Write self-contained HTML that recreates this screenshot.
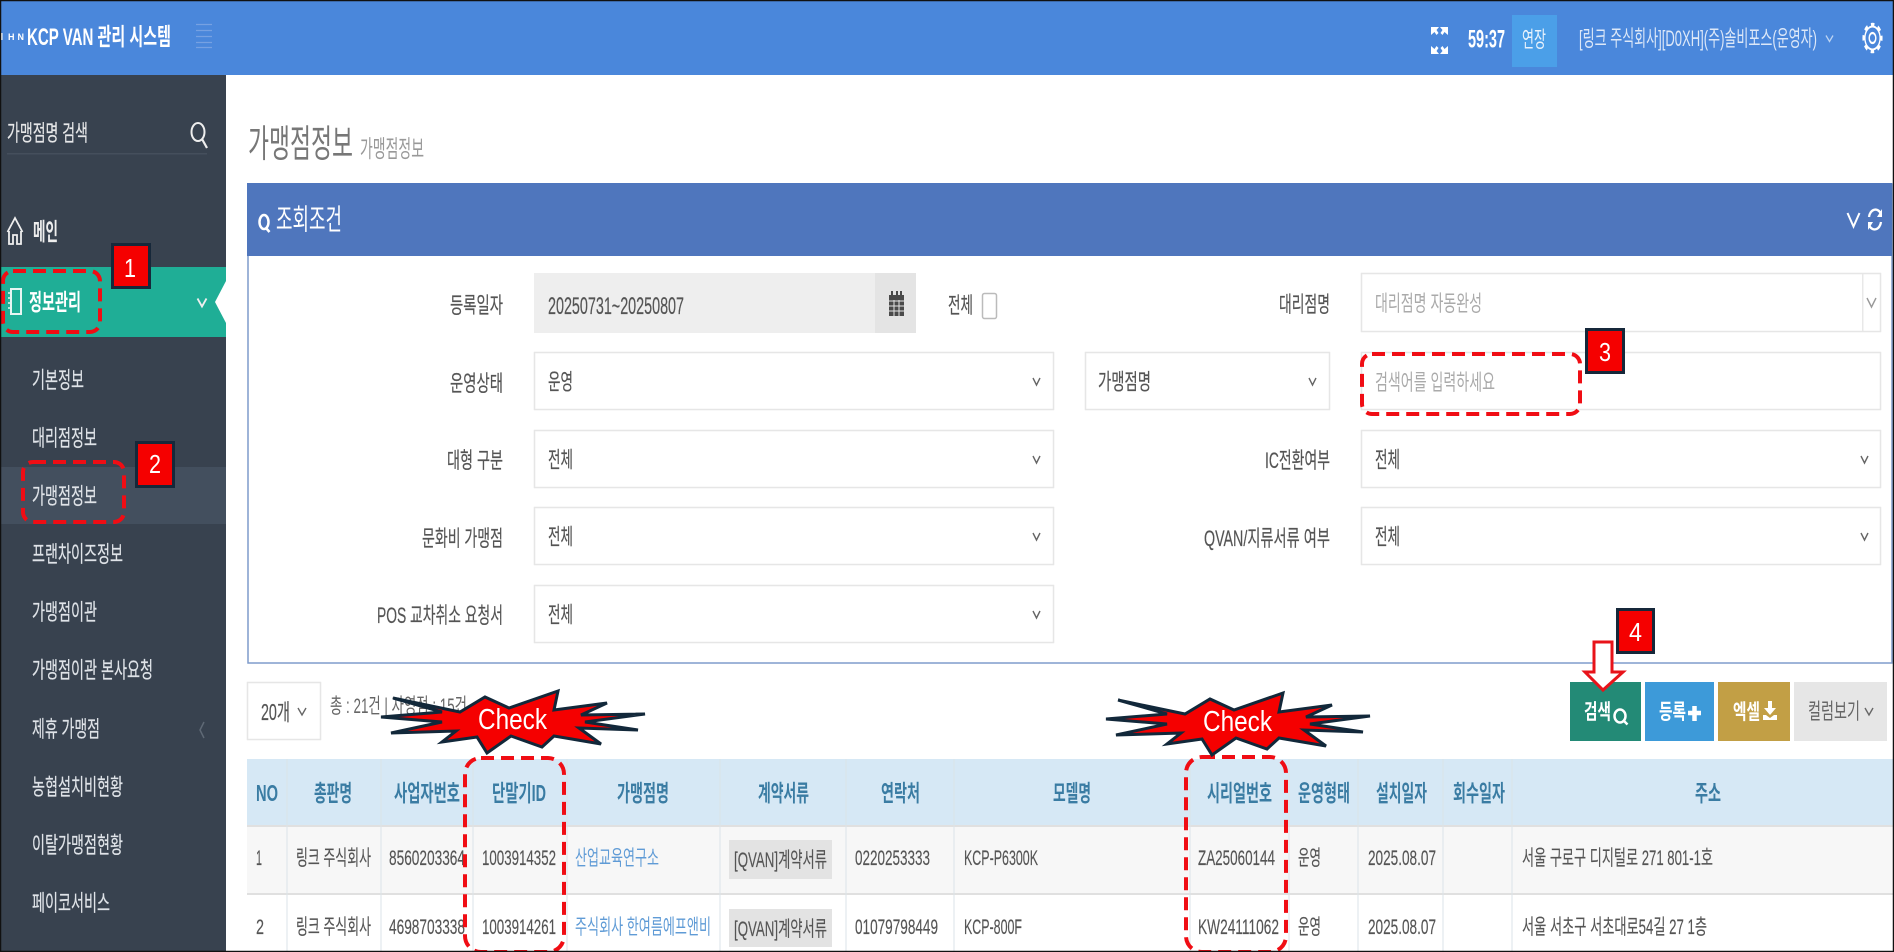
<!DOCTYPE html>
<html lang="ko"><head><meta charset="utf-8"><title>KCP VAN 관리 시스템</title>
<style>
html,body{margin:0;padding:0;background:#fff;width:1894px;height:952px;overflow:hidden}
svg{display:block;font-family:"Liberation Sans","Noto Sans CJK KR",sans-serif;filter:blur(.35px)}
.s{fill:#dfe3e8;stroke:#dfe3e8;stroke-width:.2px;font-size:22.500px}
.l{fill:#555;stroke:#555;stroke-width:.2px;font-size:22px}
.f{fill:#555;stroke:#555;stroke-width:.2px;font-size:22px}
.p{fill:#aaa;font-size:22px}
.h{fill:#3a7ca3;font-size:23px;font-weight:700}
.t{fill:#555;stroke:#555;stroke-width:.15px;font-size:21px}
.a{fill:#5f9bd6;font-size:21px}
.n{fill:#fff;font-size:26px}
.c{fill:#fff;font-size:29px}
.b{fill:#fff;font-size:21px;font-weight:700}
</style></head><body>
<svg width="1894" height="952" viewBox="0 0 1894 952" xmlns="http://www.w3.org/2000/svg">
<rect width="1894" height="952" fill="#fff"/>
<!-- header -->
<rect width="1894" height="75" fill="#4a87db"/>
<rect x="1" y="33" width="1.500" height="7" fill="#fff"/>
<text x="8" y="40" font-size="9" font-weight="700" fill="#fff" textLength="16" lengthAdjust="spacing">HN</text>
<text x="27" y="45" font-size="24" font-weight="700" fill="#fff" textLength="144" lengthAdjust="spacingAndGlyphs">KCP VAN 관리 시스템</text>
<path d="M196 24.500H212M196 30.500H212M196 36.500H212M196 42.500H212M196 47.500H212" stroke="#76a1e2" stroke-width="1.200"/>
<g fill="#fff"><path d="M1431 27h8l-2.500 3 2 3-2 2-2-3-3.500 3zM1448 27h-8l2.500 3-2 3 2 2 2-3 3.500 3zM1431 54h8l-2.500-3 2-3-2-2-2 3-3.500-3zM1448 54h-8l2.500-3-2-3 2-2 2 3 3.500-3z"/></g>
<text x="1468" y="47.500" font-size="25" font-weight="700" fill="#fff" textLength="37" lengthAdjust="spacingAndGlyphs">59:37</text>
<rect x="1512" y="15" width="45" height="52" fill="#4b9fe8"/>
<text x="1522" y="47" font-size="22" fill="#e8f2fc" textLength="24" lengthAdjust="spacingAndGlyphs">연장</text>
<text x="1579" y="46" font-size="22" fill="#dde8f8" textLength="238" lengthAdjust="spacingAndGlyphs">[링크 주식회사][D0XH](주)솔비포스(운영자)</text>
<path d="M1826 35.500l3.500 6 3.500-6" fill="none" stroke="#bcd3f2" stroke-width="1.300"/>
<g transform="translate(1872.500 38) scale(.66 1)" fill="none" stroke="#fff"><circle r="11.500" stroke-width="2"/><circle r="13.500" stroke-width="3.500" stroke-dasharray="5.300 5.300" stroke-dashoffset="2.600"/><circle r="5" stroke-width="2.200"/></g>
<!-- sidebar -->
<rect y="75" width="226" height="877" fill="#38424f"/>
<text x="7" y="141" class="s" style="fill:#e8e8e8" textLength="81" lengthAdjust="spacingAndGlyphs">가맹점명 검색</text>
<rect x="7" y="153" width="200" height="1.500" fill="#454f5c"/>
<ellipse cx="198" cy="132" rx="6.500" ry="9" fill="none" stroke="#eee" stroke-width="2"/><path d="M202 139l5 9" stroke="#eee" stroke-width="2.200"/>
<path d="M7.500 232L15 218l7.500 14M9 231v13h4v-9h4v9h4v-13" fill="none" stroke="#eee" stroke-width="1.800"/>
<text x="33" y="240" font-size="24" font-weight="700" fill="#eee" textLength="25" lengthAdjust="spacingAndGlyphs">메인</text>
<rect x="1" y="267" width="225" height="70" fill="#1fae96"/>
<path d="M226 281L215 302l11 21z" fill="#fff"/>
<path d="M197.500 298.500l4.500 8 4.500-8" fill="none" stroke="#eee" stroke-width="1.800"/>
<rect x="11" y="289" width="10" height="25" fill="none" stroke="#e8f5f2" stroke-width="2"/><path d="M8 293h3M8 298h3M8 303h3M8 308h3" stroke="#e8f5f2" stroke-width="1.500"/>
<text x="29" y="310" font-size="23" font-weight="700" fill="#fff" textLength="52" lengthAdjust="spacingAndGlyphs">정보관리</text>
<rect x="1" y="467" width="225" height="57" fill="#434f5e"/>
<text x="32" y="388" class="s" textLength="52" lengthAdjust="spacingAndGlyphs">기본정보</text>
<text x="32" y="446" class="s" textLength="65" lengthAdjust="spacingAndGlyphs">대리점정보</text>
<text x="32" y="504" class="s" textLength="65" lengthAdjust="spacingAndGlyphs">가맹점정보</text>
<text x="32" y="562" class="s" textLength="91" lengthAdjust="spacingAndGlyphs">프랜차이즈정보</text>
<text x="32" y="620" class="s" textLength="65" lengthAdjust="spacingAndGlyphs">가맹점이관</text>
<text x="32" y="678" class="s" textLength="121" lengthAdjust="spacingAndGlyphs">가맹점이관 본사요청</text>
<text x="32" y="737" class="s" textLength="68" lengthAdjust="spacingAndGlyphs">제휴 가맹점</text>
<text x="32" y="795" class="s" textLength="91" lengthAdjust="spacingAndGlyphs">농협설치비현황</text>
<text x="32" y="853" class="s" textLength="91" lengthAdjust="spacingAndGlyphs">이탈가맹점현황</text>
<text x="32" y="911" class="s" textLength="78" lengthAdjust="spacingAndGlyphs">페이코서비스</text>
<path d="M204 722l-4 8 4 8" fill="none" stroke="#5f6975" stroke-width="1.500"/>
<!-- title -->
<text x="248" y="157" font-size="38" fill="#777" textLength="105" lengthAdjust="spacingAndGlyphs">가맹점정보</text>
<text x="360" y="157" font-size="24" fill="#999" textLength="64" lengthAdjust="spacingAndGlyphs">가맹점정보</text>
<!-- panel -->
<rect x="248" y="184" width="1644" height="479" fill="#fff" stroke="#7f9ccc" stroke-width="1.500"/>
<rect x="247" y="183" width="1645" height="73" fill="#4f76bd"/>
<ellipse cx="264" cy="222" rx="4.500" ry="7" fill="none" stroke="#fff" stroke-width="2.500"/><path d="M266 228l3.500 4" stroke="#fff" stroke-width="2.500"/>
<text x="276" y="229.500" class="c" textLength="66" lengthAdjust="spacingAndGlyphs">조회조건</text>
<path d="M1847.500 213l6 13.500 6-13.500" fill="none" stroke="#fff" stroke-width="2"/>
<path d="M1869 217a6.500 9 0 0 1 12-3M1881 222a6.500 9 0 0 1-12 3" fill="none" stroke="#fff" stroke-width="2.300"/><path d="M1882 209v8h-5zM1868 230v-8h5z" fill="#fff"/>
<!-- labels -->
<text x="450" y="313" class="l" textLength="53" lengthAdjust="spacingAndGlyphs">등록일자</text>
<text x="450" y="391" class="l" textLength="53" lengthAdjust="spacingAndGlyphs">운영상태</text>
<text x="447" y="468" class="l" textLength="56" lengthAdjust="spacingAndGlyphs">대형 구분</text>
<text x="422" y="546" class="l" textLength="81" lengthAdjust="spacingAndGlyphs">문화비 가맹점</text>
<text x="377" y="623" class="l" textLength="126" lengthAdjust="spacingAndGlyphs">POS 교차취소 요청서</text>
<text x="1279" y="312" class="l" textLength="51" lengthAdjust="spacingAndGlyphs">대리점명</text>
<text x="1265" y="468" class="l" textLength="65" lengthAdjust="spacingAndGlyphs">IC전환여부</text>
<text x="1204" y="546" class="l" textLength="126" lengthAdjust="spacingAndGlyphs">QVAN/지류서류 여부</text>
<!-- date -->
<rect x="534" y="273" width="382" height="60" fill="#eee"/><rect x="875" y="273" width="41" height="60" fill="#e4e4e4"/>
<text x="548" y="314" class="f" style="font-size:24px" textLength="136" lengthAdjust="spacingAndGlyphs">20250731~20250807</text>
<rect x="889" y="295" width="15" height="21" fill="#4a4a4a"/><path d="M889 301h15M889 306h15M889 311h15M894 300v16M899 300v16" stroke="#e4e4e4" stroke-width="1"/><path d="M892 291v5M897 291v5M901 291v5" stroke="#4a4a4a" stroke-width="2"/>
<text x="948" y="313" class="l" textLength="25" lengthAdjust="spacingAndGlyphs">전체</text>
<rect x="982.500" y="293.500" width="14" height="25" rx="2" fill="#fff" stroke="#bbb" stroke-width="1.500"/>
<!-- selects -->
<g fill="#fff" stroke="#e6e6e6" stroke-width="1.500">
<rect x="534.500" y="352.500" width="519" height="57"/><rect x="534.500" y="430.500" width="519" height="57"/><rect x="534.500" y="507.500" width="519" height="57"/><rect x="534.500" y="585.500" width="519" height="57"/>
<rect x="1085.500" y="352.500" width="244" height="57"/>
<rect x="1361.500" y="273.500" width="519" height="58"/><rect x="1361.500" y="352.500" width="519" height="57"/><rect x="1361.500" y="430.500" width="519" height="57"/><rect x="1361.500" y="507.500" width="519" height="57"/>
</g>
<rect x="1862" y="274" width="1.500" height="57" fill="#e8e8e8"/>
<text x="548" y="389.500" class="f" textLength="25" lengthAdjust="spacingAndGlyphs">운영</text>
<text x="548" y="467.500" class="f" textLength="25" lengthAdjust="spacingAndGlyphs">전체</text>
<text x="548" y="544.500" class="f" textLength="25" lengthAdjust="spacingAndGlyphs">전체</text>
<text x="548" y="622.500" class="f" textLength="25" lengthAdjust="spacingAndGlyphs">전체</text>
<text x="1098" y="389.500" class="f" textLength="53" lengthAdjust="spacingAndGlyphs">가맹점명</text>
<text x="1375" y="311" class="p" textLength="107" lengthAdjust="spacingAndGlyphs">대리점명 자동완성</text>
<text x="1375" y="390" class="p" textLength="120" lengthAdjust="spacingAndGlyphs">검색어를 입력하세요</text>
<text x="1375" y="467.500" class="f" textLength="25" lengthAdjust="spacingAndGlyphs">전체</text>
<text x="1375" y="544.500" class="f" textLength="25" lengthAdjust="spacingAndGlyphs">전체</text>
<g fill="none" stroke="#666" stroke-width="1.400">
<path d="M1033 378l3.500 7 3.500-7M1033 456l3.500 7 3.500-7M1033 533l3.500 7 3.500-7M1033 611l3.500 7 3.500-7M1309 378l3.500 7 3.500-7M1861 456l3.500 7 3.500-7M1861 533l3.500 7 3.500-7"/>
<path d="M1867 298l4.500 9 4.500-9" stroke="#999"/>
</g>
<!-- list bar -->
<rect x="247.500" y="682.500" width="73" height="57" fill="#fff" stroke="#e6e6e6" stroke-width="1.500"/>
<text x="261" y="720" class="f" style="font-size:23px" textLength="29" lengthAdjust="spacingAndGlyphs">20개</text>
<path d="M298 708l4 7 4-7" fill="none" stroke="#666" stroke-width="1.400"/>
<text x="330" y="713" font-size="21" fill="#666" textLength="137" lengthAdjust="spacingAndGlyphs">총 : 21건 | 자영점 : 15건</text>
<!-- buttons -->
<rect x="1570" y="682" width="71" height="59" fill="#238a76"/>
<rect x="1645" y="682" width="69" height="59" fill="#3d9ad9"/>
<rect x="1718" y="682" width="72" height="59" fill="#c29f45"/>
<rect x="1794" y="682" width="93" height="59" fill="#e6e6e6"/>
<text x="1584" y="719" class="b" textLength="27" lengthAdjust="spacingAndGlyphs">검색</text>
<ellipse cx="1620" cy="716" rx="5.500" ry="6.500" fill="none" stroke="#fff" stroke-width="2.500"/><path d="M1624 721l3.500 3.500" stroke="#fff" stroke-width="2.500"/>
<text x="1659" y="719" class="b" textLength="27" lengthAdjust="spacingAndGlyphs">등록</text>
<path d="M1694.500 706v15M1688 713h13" stroke="#fff" stroke-width="4.500"/>
<text x="1733" y="719" class="b" textLength="27" lengthAdjust="spacingAndGlyphs">엑셀</text>
<path d="M1768 701h4v7h4l-6 7-6-7h4zM1763 715h3l4 3 4-3h3v5h-14z" fill="#fff"/>
<text x="1808" y="719" font-size="22" fill="#666" textLength="52" lengthAdjust="spacingAndGlyphs">컬럼보기</text>
<path d="M1865 708l4 7 4-7" fill="none" stroke="#666" stroke-width="1.400"/>
<!-- table -->
<rect x="247" y="759" width="1646" height="66" fill="#d6e8f5"/>
<rect x="247" y="825" width="1646" height="69" fill="#f7f7f7"/>
<rect x="247" y="825" width="1646" height="2" fill="#e0e0e0"/>
<rect x="247" y="893" width="1646" height="2" fill="#e0e0e0"/>
<path d="M287 759V952M381 759V952M473 759V952M567 759V952M720 759V952M846 759V952M954 759V952M1190 759V952M1289 759V952M1358 759V952M1443 759V952M1512 759V952" stroke="#dbe3e8" stroke-width="1"/>
<text x="256" y="801" class="h" textLength="22" lengthAdjust="spacingAndGlyphs">NO</text>
<text x="314" y="801" class="h" textLength="38" lengthAdjust="spacingAndGlyphs">총판명</text>
<text x="394" y="801" class="h" textLength="66" lengthAdjust="spacingAndGlyphs">사업자번호</text>
<text x="492" y="801" class="h" textLength="54" lengthAdjust="spacingAndGlyphs">단말기ID</text>
<text x="617" y="801" class="h" textLength="52" lengthAdjust="spacingAndGlyphs">가맹점명</text>
<text x="758" y="801" class="h" textLength="51" lengthAdjust="spacingAndGlyphs">계약서류</text>
<text x="881" y="801" class="h" textLength="39" lengthAdjust="spacingAndGlyphs">연락처</text>
<text x="1053" y="801" class="h" textLength="38" lengthAdjust="spacingAndGlyphs">모델명</text>
<text x="1207" y="801" class="h" textLength="65" lengthAdjust="spacingAndGlyphs">시리얼번호</text>
<text x="1298" y="801" class="h" textLength="52" lengthAdjust="spacingAndGlyphs">운영형태</text>
<text x="1376" y="801" class="h" textLength="51" lengthAdjust="spacingAndGlyphs">설치일자</text>
<text x="1453" y="801" class="h" textLength="52" lengthAdjust="spacingAndGlyphs">회수일자</text>
<text x="1695" y="801" class="h" textLength="26" lengthAdjust="spacingAndGlyphs">주소</text>
<!-- row 1 -->
<text x="256" y="865" class="t" textLength="6" lengthAdjust="spacingAndGlyphs">1</text>
<text x="296" y="865" class="t" textLength="75" lengthAdjust="spacingAndGlyphs">링크 주식회사</text>
<text x="389" y="865" class="t" textLength="76" lengthAdjust="spacingAndGlyphs">8560203364</text>
<text x="482" y="865" class="t" textLength="74" lengthAdjust="spacingAndGlyphs">1003914352</text>
<text x="575" y="865" class="a" textLength="84" lengthAdjust="spacingAndGlyphs">산업교육연구소</text>
<rect x="729" y="840" width="103" height="39" fill="#e3e3e3"/>
<text x="734" y="867" class="t" textLength="93" lengthAdjust="spacingAndGlyphs">[QVAN]계약서류</text>
<text x="855" y="865" class="t" textLength="75" lengthAdjust="spacingAndGlyphs">0220253333</text>
<text x="964" y="865" class="t" textLength="74" lengthAdjust="spacingAndGlyphs">KCP-P6300K</text>
<text x="1198" y="865" class="t" textLength="77" lengthAdjust="spacingAndGlyphs">ZA25060144</text>
<text x="1298" y="865" class="t" textLength="23" lengthAdjust="spacingAndGlyphs">운영</text>
<text x="1368" y="865" class="t" textLength="68" lengthAdjust="spacingAndGlyphs">2025.08.07</text>
<text x="1522" y="865" class="t" textLength="191" lengthAdjust="spacingAndGlyphs">서울 구로구 디지털로 271 801-1호</text>
<!-- row 2 -->
<text x="256" y="934" class="t" textLength="8" lengthAdjust="spacingAndGlyphs">2</text>
<text x="296" y="934" class="t" textLength="75" lengthAdjust="spacingAndGlyphs">링크 주식회사</text>
<text x="389" y="934" class="t" textLength="76" lengthAdjust="spacingAndGlyphs">4698703338</text>
<text x="482" y="934" class="t" textLength="74" lengthAdjust="spacingAndGlyphs">1003914261</text>
<text x="575" y="934" class="a" textLength="136" lengthAdjust="spacingAndGlyphs">주식회사 한여름에프앤비</text>
<rect x="729" y="909" width="103" height="38" fill="#e3e3e3"/>
<text x="734" y="936" class="t" textLength="93" lengthAdjust="spacingAndGlyphs">[QVAN]계약서류</text>
<text x="855" y="934" class="t" textLength="83" lengthAdjust="spacingAndGlyphs">01079798449</text>
<text x="964" y="934" class="t" textLength="58" lengthAdjust="spacingAndGlyphs">KCP-800F</text>
<text x="1198" y="934" class="t" textLength="81" lengthAdjust="spacingAndGlyphs">KW24111062</text>
<text x="1298" y="934" class="t" textLength="23" lengthAdjust="spacingAndGlyphs">운영</text>
<text x="1368" y="934" class="t" textLength="68" lengthAdjust="spacingAndGlyphs">2025.08.07</text>
<text x="1522" y="934" class="t" textLength="185" lengthAdjust="spacingAndGlyphs">서울 서초구 서초대로54길 27 1층</text>
<!-- annotations: dashed boxes -->
<g fill="none" stroke="#f00d14" stroke-width="4" stroke-dasharray="13 7">
<rect x="3" y="271" width="97" height="61" rx="10"/>
<rect x="23" y="462" width="101" height="60" rx="10"/>
<rect x="1362" y="354" width="218" height="60" rx="10"/>
<rect x="465" y="758" width="99" height="194" rx="16"/>
<rect x="1186" y="757" width="100" height="195" rx="16"/>
</g>
<!-- badges -->
<g fill="#f50000" stroke="#16283a" stroke-width="3">
<rect x="112.500" y="244.500" width="37" height="43"/>
<rect x="136.500" y="442.500" width="37" height="44"/>
<rect x="1586.500" y="329.500" width="37" height="43"/>
<rect x="1617.500" y="609.500" width="36" height="43"/>
</g>
<text x="124" y="277" class="n" textLength="12" lengthAdjust="spacingAndGlyphs">1</text>
<text x="149" y="473" class="n" textLength="12" lengthAdjust="spacingAndGlyphs">2</text>
<text x="1599" y="361" class="n" textLength="12" lengthAdjust="spacingAndGlyphs">3</text>
<text x="1629" y="641" class="n" textLength="13" lengthAdjust="spacingAndGlyphs">4</text>
<!-- arrow -->
<path d="M1594 642h18v30h11l-20 18-18-18h9z" fill="#fff" stroke="#e8131a" stroke-width="3"/>
<!-- bursts -->
<g><path d="M393 698L460 712L485 697L509 708L558 691L554 710L607 703L581 715L645 714L585 722L638 730L579 728L601 744L554 736L542 747L511 736L487 753L477 737L442 742L456 731L391 733L442 722L381 717L442 712Z" fill="#f50000" stroke="#12283a" stroke-width="3"/>
<text x="478" y="729" font-size="29" fill="#fff" textLength="69" lengthAdjust="spacingAndGlyphs">Check</text></g>
<g transform="translate(725 2)"><path d="M393 698L460 712L485 697L509 708L558 691L554 710L607 703L581 715L645 714L585 722L638 730L579 728L601 744L554 736L542 747L511 736L487 753L477 737L442 742L456 731L391 733L442 722L381 717L442 712Z" fill="#f50000" stroke="#12283a" stroke-width="3"/>
<text x="478" y="729" font-size="29" fill="#fff" textLength="69" lengthAdjust="spacingAndGlyphs">Check</text></g>
<!-- frame -->
<rect x=".5" y=".5" width="1893" height="951" fill="none" stroke="#111" stroke-width="1.500"/>
</svg>
</body></html>
